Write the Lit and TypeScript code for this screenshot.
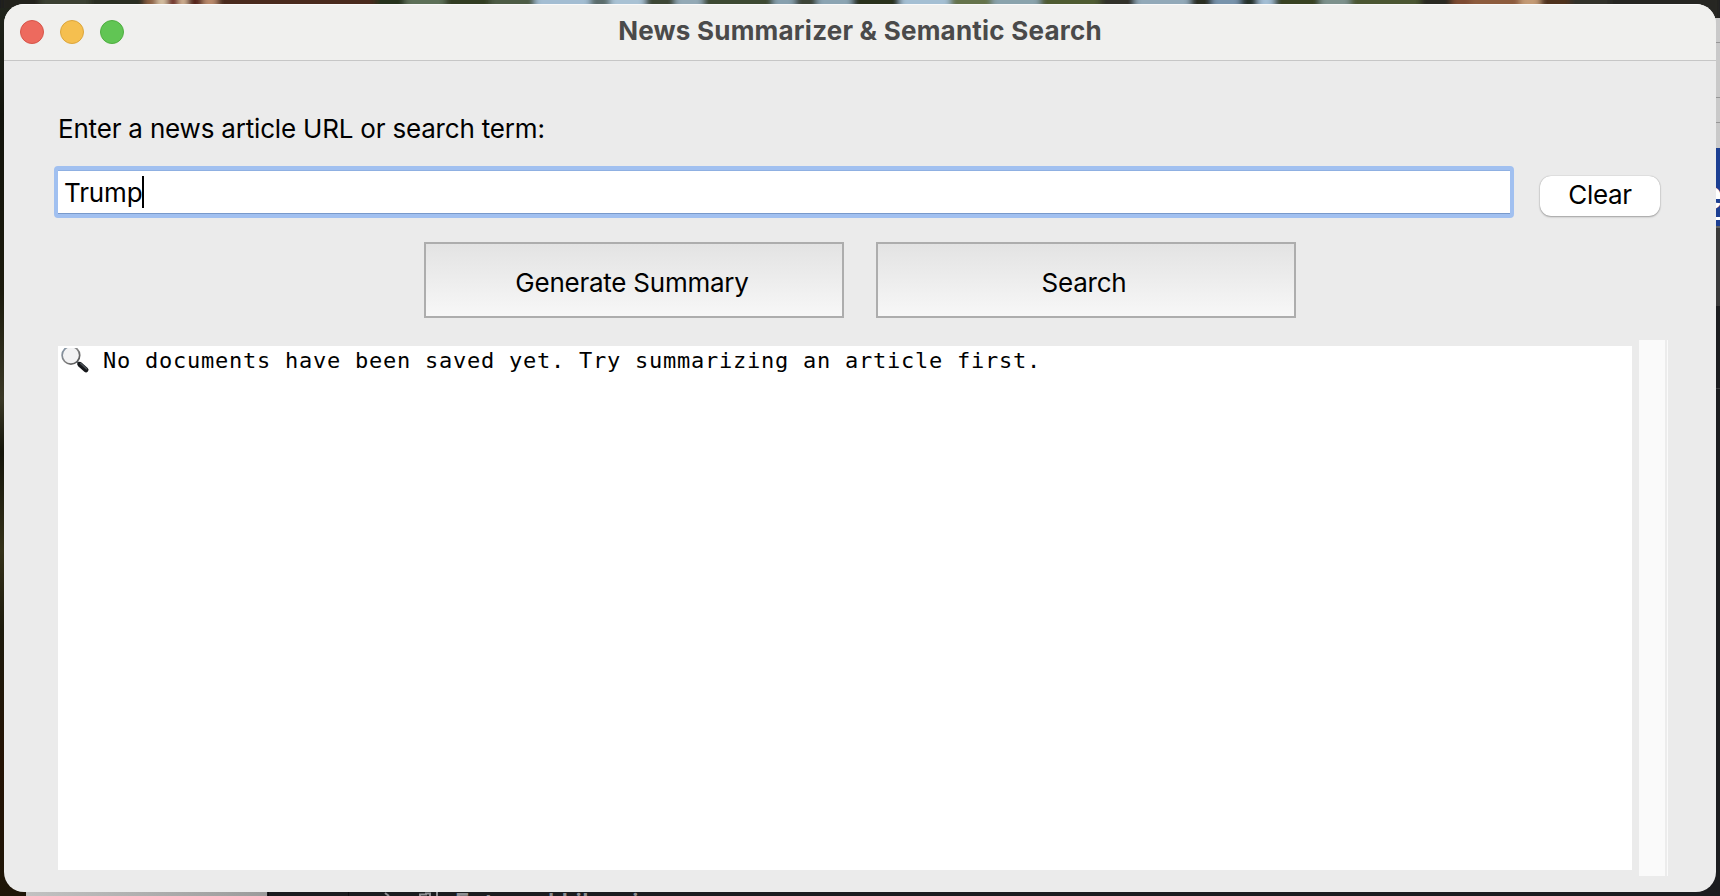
import { LitElement, html, css, svg } from "lit";
import { customElement, state } from "lit/decorators.js";

/** Colour patches of the wallpaper strip above the window: [x, width, colour]. */
const WALLPAPER: [number, number, string][] = [
  [0, 40, "#20241b"], [40, 50, "#3a4030"], [90, 55, "#2b2f22"], [145, 12, "#8e6244"],
  [157, 10, "#d8c3a4"], [167, 12, "#6f2a20"], [179, 8, "#d9b99a"], [187, 16, "#57281b"],
  [203, 14, "#b98a6c"], [217, 158, "#4a2a1c"], [375, 30, "#27301f"], [405, 40, "#5d7059"],
  [445, 45, "#303c22"], [490, 45, "#4d5c45"], [535, 55, "#a3bdd2"], [590, 20, "#5c6d6c"],
  [610, 35, "#a9c2d4"], [645, 30, "#3d4634"], [675, 28, "#93a9b5"], [703, 70, "#3c4a30"],
  [773, 22, "#87a0ae"], [795, 22, "#3c4437"], [817, 35, "#8ba4b2"], [852, 48, "#2c311f"],
  [900, 50, "#a4bfd3"], [950, 42, "#65734c"], [992, 48, "#8aa3ac"], [1040, 60, "#4f5b31"],
  [1100, 35, "#33322a"], [1135, 55, "#92a9b8"], [1190, 22, "#2b2d24"], [1212, 28, "#7793ab"],
  [1240, 18, "#27332c"], [1258, 16, "#a3bed4"], [1274, 46, "#384322"], [1320, 30, "#7d918c"],
  [1350, 70, "#4c5730"], [1420, 32, "#2a2a20"], [1452, 18, "#7d4c33"], [1470, 50, "#8d5b3e"],
  [1520, 20, "#c39a75"], [1540, 30, "#50301f"], [1570, 40, "#30302a"], [1610, 110, "#252722"],
];

@customElement("desktop-backdrop")
export class DesktopBackdrop extends LitElement {
  static styles = css`
    :host { display: block; }
    .art { display: block; width: 1720px; height: 896px; }
    .project { font: 600 24px Inter, sans-serif; fill: #8d8e92; }
    .link { font: 700 40px "Liberation Sans", sans-serif; fill: #fff; }
  `;

  render() {
    return html`
      <svg class="art" viewBox="0 0 1720 896" aria-hidden="true">
        <defs>
          <linearGradient id="bark" x1="0" y1="0" x2="0" y2="1">
            <stop offset="0" stop-color="#20241b" />
            <stop offset=".12" stop-color="#12130c" />
            <stop offset=".32" stop-color="#1b1a0c" />
            <stop offset=".44" stop-color="#3a3826" />
            <stop offset=".5" stop-color="#14140a" />
            <stop offset=".61" stop-color="#343119" />
            <stop offset=".7" stop-color="#1d1a0c" />
            <stop offset=".85" stop-color="#251304" />
            <stop offset="1" stop-color="#1e1507" />
          </linearGradient>
          <linearGradient id="sheet" x1="0" y1="0" x2="1" y2="0">
            <stop offset="0" stop-color="#c2c2c2" />
            <stop offset="1" stop-color="#9b9b9b" />
          </linearGradient>
          <filter id="soft" x="0" y="0" width="1" height="1">
            <feGaussianBlur stdDeviation="3 0" />
          </filter>
        </defs>
        <rect width="1720" height="896" fill="#1b1c1f" />
        <g filter="url(#soft)">
          ${WALLPAPER.map(([x, w, c]) => svg`<rect x=${x} y="0" width=${w + 1} height="18" fill=${c} />`)}
        </g>
        <rect y="8" width="26" height="888" fill="url(#bark)" />

        <rect x="1700" y="18" width="20" height="130" fill="#c9c9c9" />
        <path d="M1712 42.5h8M1712 97.5h8M1712 122.5h8" stroke="#969696" />
        <rect x="1712" y="148" width="8" height="78" fill="#1c3f92" />
        <text class="link" x="1700" y="209">e</text>
        <path d="M1714 218.500h6" stroke="#fff" stroke-width="3" />
        <rect x="1712" y="226" width="8" height="80" fill="#393939" />
        <path d="M1712 227h8" stroke="#8a8a8a" />
        <path d="M1712 388.500h8" stroke="#3a3b3d" />

        <rect x="26" y="880" width="241" height="16" fill="url(#sheet)" />
        <path d="M268.500 880v16M348.500 880v16" stroke="#0c0d0f" />
        <path d="M385 893l4 3" stroke="#8d8e92" stroke-width="2" />
        <path d="M420 896v-1.500h6v-1h4v2.500M437 892v4" stroke="#8d8e92" stroke-width="2" fill="none" />
        <text class="project" x="455" y="910.500" textLength="212">External Libraries</text>
      </svg>
    `;
  }
}

@customElement("magnifier-icon")
export class MagnifierIcon extends LitElement {
  static styles = css`
    :host { display: block; width: 30px; height: 26px; }
    .glyph { display: block; }
  `;

  render() {
    return html`
      <svg class="glyph" width="30" height="26" viewBox="0 0 30 26" aria-hidden="true">
        <defs>
          <linearGradient id="rim" x1="0" y1="0" x2="1" y2="1">
            <stop offset="0" stop-color="#8397ab" />
            <stop offset=".5" stop-color="#858585" />
            <stop offset="1" stop-color="#4a4a4a" />
          </linearGradient>
          <linearGradient id="grip" x1="0" y1="1" x2="1" y2="0">
            <stop offset="0" stop-color="#23272a" />
            <stop offset=".55" stop-color="#4b5258" />
            <stop offset="1" stop-color="#7d8892" />
          </linearGradient>
        </defs>
        <circle cx="9.900" cy="7.300" r="8.800" fill="#f3f3f4" stroke="url(#rim)" stroke-width="1.700" />
        <path d="M15.800 13.500l3 2.800" stroke="#5a5f64" stroke-width="2.200" />
        <path d="M18.800 16.300l6.200 5.600" stroke="#15171a" stroke-width="5" stroke-linecap="round" />
        <path d="M19.600 15.500l6 5.300" stroke="url(#grip)" stroke-width="1.600" stroke-linecap="round" />
      </svg>
    `;
  }
}

@customElement("app-root")
export class AppRoot extends LitElement {
  @state() private query = "Trump";
  @state() private output = "No documents have been saved yet. Try summarizing an article first.";

  static styles = css`
    :host {
      display: grid;
      width: 1720px;
      height: 896px;
      overflow: hidden;
      font-family: Inter, "Liberation Sans", sans-serif;
      color: #000;
    }
    * { box-sizing: border-box; }
    .backdrop, .window { grid-area: 1 / 1; }
    .window {
      margin: 4px;
      display: flex;
      flex-direction: column;
      border-radius: 20px;
      overflow: hidden;
      background: #ebebeb;
      z-index: 1;
    }
    .titlebar {
      flex: none;
      height: 57px;
      display: grid;
      grid-template-columns: 200px 1fr 200px;
      background: #f0f0ee;
      border-bottom: 1px solid #c6c6c6;
      box-shadow: inset 0 1px #fafafa;
    }
    .lights { display: flex; gap: 16px; padding: 16px 0 0 16px; }
    .light { width: 24px; height: 24px; border-radius: 50%; border: 1px solid; }
    .close { background: #ed6a5e; border-color: #d65549; }
    .minimise { background: #f5bf4f; border-color: #dba53c; }
    .zoom { background: #61c554; border-color: #4fae40; }
    .title {
      margin: 0;
      text-align: center;
      font-size: 26px;
      line-height: 32px;
      padding-top: 11px;
      font-weight: 700;
      letter-spacing: 0.220px;
      color: #4a4a4a;
      white-space: nowrap;
    }
    .content {
      flex: 1;
      display: flex;
      flex-direction: column;
      padding: 52px 48px 16px 50px;
    }
    .label {
      padding-left: 4px;
      height: 53px;
      font-size: 26px;
      line-height: 32px;
      letter-spacing: -0.190px;
      white-space: nowrap;
    }
    .entry-row { display: flex; align-items: flex-start; gap: 26px; height: 52px; }
    .entry {
      width: 1460px;
      height: 52px;
      display: flex;
      align-items: flex-start;
      border: 4px solid #a1c0f0;
      border-radius: 4px;
      background: #fff;
      box-shadow: inset 0 -1px #7899cb, inset 0 1px #8fb0e2;
      padding: 6px 0 0 6px;
    }
    .value { font-size: 26px; line-height: 34px; letter-spacing: -0.150px; }
    .caret { width: 2px; height: 32px; background: #000; }
    .clear {
      width: 120px;
      height: 40px;
      margin-top: 10px;
      border-radius: 11px;
      background: #fff;
      box-shadow: 0 0 1px rgba(0, 0, 0, 0.35), 0 1px 2px rgba(0, 0, 0, 0.3);
      text-align: center;
      font-size: 26px;
      line-height: 38px;
      letter-spacing: -0.300px;
    }
    .actions { display: flex; gap: 32px; margin: 24px 0 0 370px; height: 76px; }
    .action {
      width: 420px;
      height: 76px;
      padding-right: 4px;
      border: 2px solid #adadad;
      background: linear-gradient(#e3e3e3, #f7f7f7);
      text-align: center;
      font-size: 26px;
      line-height: 78px;
      letter-spacing: -0.240px;
      white-space: nowrap;
    }
    .results { display: flex; margin: 22px 0 0 4px; height: 536px; }
    .document {
      width: 1574px;
      height: 524px;
      margin-top: 6px;
      padding: 2px 0 0 3px;
      display: flex;
      background: #fff;
    }
    .message {
      margin-left: 12px;
      font-family: "DejaVu Sans Mono", monospace;
      font-size: 22px;
      line-height: 26px;
      letter-spacing: 0.755px;
      white-space: pre;
    }
    .scrollbar {
      width: 29px;
      height: 536px;
      margin-left: 7px;
      background: linear-gradient(90deg, #fafafa 26px, #ececec 26px, #ececec 28px, #fafafa 28px);
    }
  `;

  render() {
    return html`
      <desktop-backdrop class="backdrop"></desktop-backdrop>
      <main class="window">
        <header class="titlebar">
          <div class="lights">
            <span class="light close"></span>
            <span class="light minimise"></span>
            <span class="light zoom"></span>
          </div>
          <h1 class="title">News Summarizer &amp; Semantic Search</h1>
        </header>
        <section class="content">
          <div class="label">Enter a news article URL or search term:</div>
          <div class="entry-row">
            <div class="entry" role="textbox">
              <span class="value">${this.query}</span><span class="caret"></span>
            </div>
            <div class="clear" role="button" @click=${() => (this.query = "")}>Clear</div>
          </div>
          <div class="actions">
            <div class="action" role="button">Generate Summary</div>
            <div class="action" role="button">Search</div>
          </div>
          <div class="results">
            <div class="document">
              <magnifier-icon></magnifier-icon>
              <span class="message">${this.output}</span>
            </div>
            <div class="scrollbar"></div>
          </div>
        </section>
      </main>
    `;
  }
}
